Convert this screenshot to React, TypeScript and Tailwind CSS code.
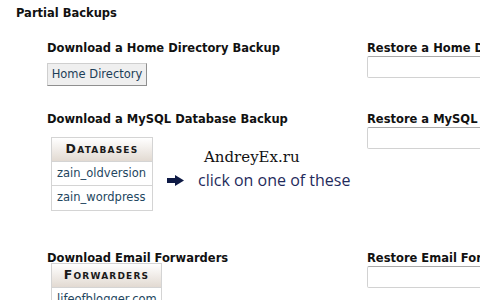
import React from 'react';

const headFont = { fontFamily: '"DejaVu Sans", Verdana, sans-serif' };

const Heading: React.FC<{ children: React.ReactNode }> = ({ children }) => (
    <div className="h-[14px] text-[11.5px] leading-[14px] font-bold text-[#111] whitespace-nowrap">{children}</div>
);

const RestoreInput: React.FC = () => (
    <div className="mt-px h-[22px] w-[140px] rounded-[2px] border border-[#d2d2d2] border-t-[#a9a9a9] bg-white" />
);

const ListTable: React.FC<{ title: string; rows: string[]; width: string }> = ({ title, rows, width }) => (
    <div className={`${width} border border-[#d4d4d4] bg-white`}>
        <div className="h-[24px] flex items-center justify-center bg-gradient-to-b from-white to-[#e2dad2] border-b border-[#d4d4d4] text-[12.5px] font-bold text-[#1a1a1a] [font-variant:small-caps] tracking-[1.2px]">
            {title}
        </div>
        {rows.map((r, i) => (
            <div key={r} className={`h-[24px] flex items-center pl-[5px] text-[11.5px] text-[#234660] whitespace-nowrap ${i < rows.length - 1 ? 'border-b border-[#d4d4d4]' : ''}`}>
                {r}
            </div>
        ))}
    </div>
);

export default function App() {
    return (
        <div className="w-[480px] h-[300px] overflow-hidden bg-white" style={headFont}>
            <div className="pt-[6px] pl-[16px]">
                <Heading>Partial Backups</Heading>
            </div>

            {/* home directory */}
            <div className="mt-[21px] flex">
                <div className="w-[367px] shrink-0 pl-[47px]">
                    <Heading>Download a Home Directory Backup</Heading>
                    <button className="mt-[8px] h-[23px] w-[100px] bg-[#efefef] border border-[#cfcfcf] border-b-[#8f8f8f] border-r-[#8f8f8f] text-[11.5px] text-[#1d3e58] whitespace-nowrap">
                        Home Directory
                    </button>
                </div>
                <div className="shrink-0">
                    <Heading>Restore a Home Directory Backup</Heading>
                    <RestoreInput />
                </div>
            </div>

            {/* mysql */}
            <div className="mt-[26px] flex">
                <div className="w-[367px] shrink-0 pl-[47px]">
                    <Heading>Download a MySQL Database Backup</Heading>
                    <div className="mt-[11px] pl-[4px] flex">
                        <ListTable title="Databases" rows={['zain_oldversion', 'zain_wordpress']} width="w-[102px]" />
                        <div className="ml-[14px] flex items-end pb-[21px]">
                            <svg width="17" height="11" viewBox="0 0 17 11" className="mb-[4px]">
                                <rect x="0" y="3" width="9" height="5" fill="#0e1a45" />
                                <polygon points="8,0 17,5.5 8,11" fill="#0e1a45" />
                            </svg>
                            <div className="ml-[14px] flex flex-col">
                                <div className="pl-[6px] text-[15px] leading-[18px] text-[#111]" style={{ fontFamily: '"DejaVu Serif", "Liberation Serif", serif' }}>
                                    AndreyEx.ru
                                </div>
                                <div className="mt-[4px] text-[16px] leading-[20px] text-[#1f2b5c] whitespace-nowrap" style={{ fontFamily: '"Open Sans", sans-serif' }}>
                                    click on one of these
                                </div>
                            </div>
                        </div>
                    </div>
                </div>
                <div className="shrink-0">
                    <Heading>Restore a MySQL Database Backup</Heading>
                    <RestoreInput />
                </div>
            </div>

            {/* email forwarders */}
            <div className="mt-[40px] flex">
                <div className="w-[367px] shrink-0 pl-[47px]">
                    <Heading>Download Email Forwarders</Heading>
                    <div className="-mt-[2px] pl-[4px]">
                        <ListTable title="Forwarders" rows={['lifeofblogger.com']} width="w-[111px]" />
                    </div>
                </div>
                <div className="shrink-0">
                    <Heading>Restore Email Forwarders</Heading>
                    <RestoreInput />
                </div>
            </div>
        </div>
    );
}
